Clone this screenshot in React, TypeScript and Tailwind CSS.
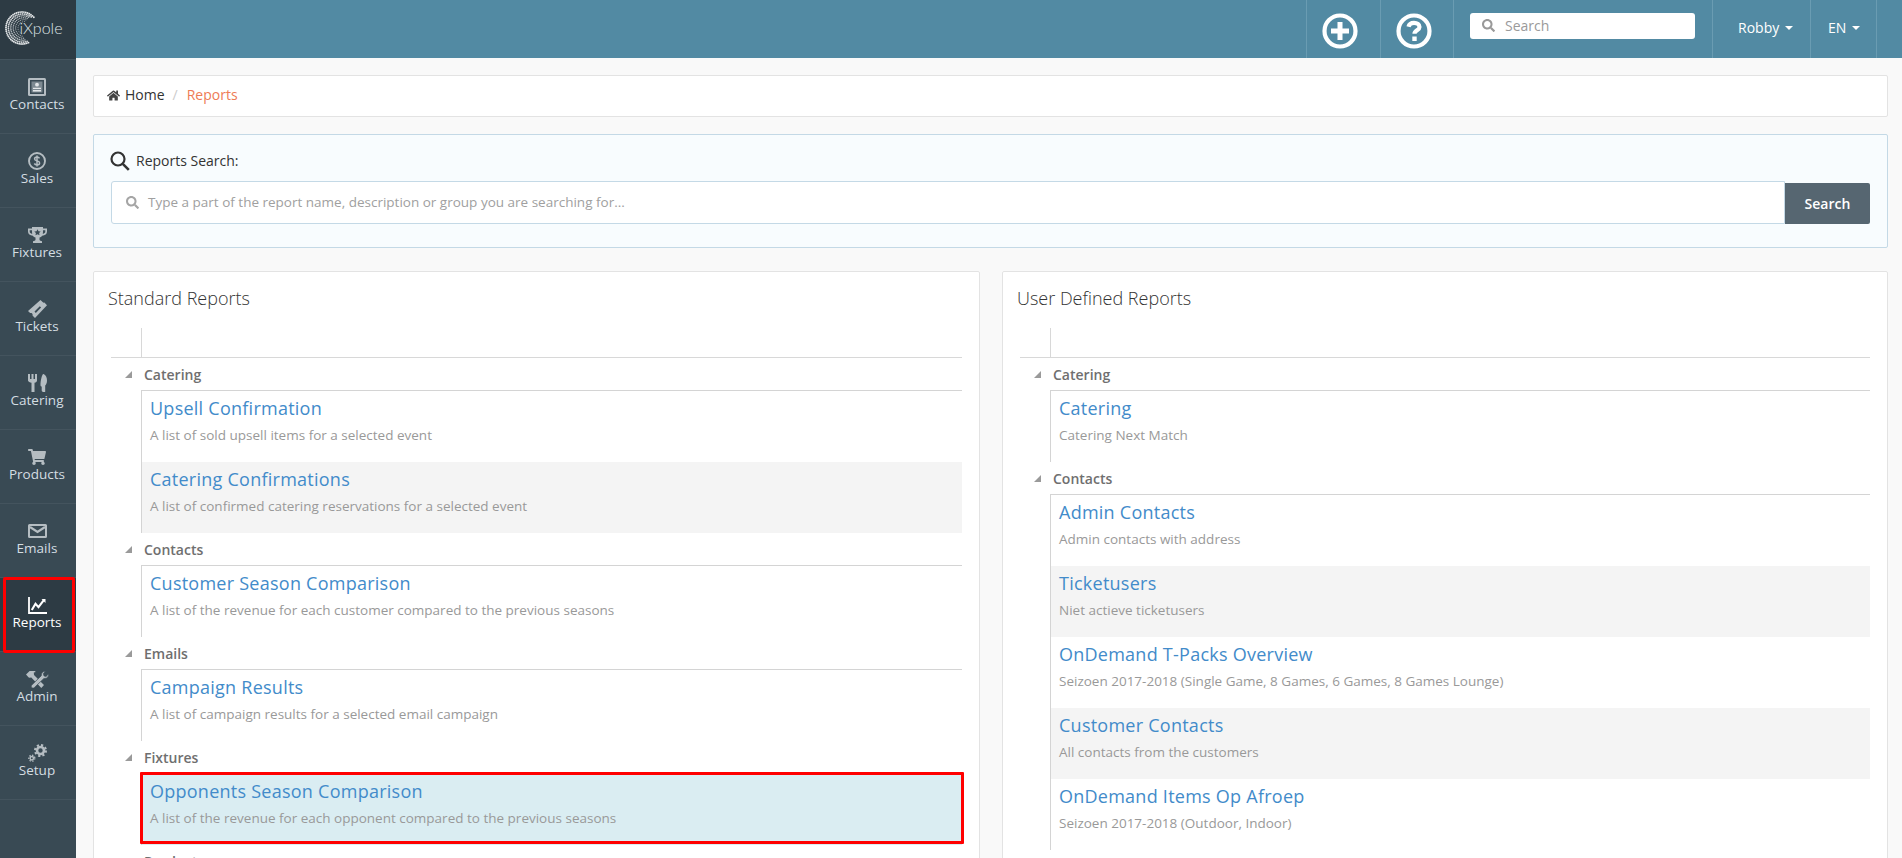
import React from "react";
import { FaHome, FaSearch, FaShoppingCart } from "react-icons/fa";

const IconContacts = () => (
  <svg width="18" height="18" viewBox="0 0 18 18">
    <rect x="0" y="0" width="18" height="18" rx="1.500" fill="currentColor" />
    <rect x="2" y="2" width="14" height="14" fill="#394a54" />
    <rect x="3.500" y="3.500" width="11" height="11" fill="currentColor" opacity="0.55" />
    <circle cx="9" cy="6.700" r="1.900" fill="#e2e6e8" />
    <path d="M5 9.700h8v1.400H5zM5 12h8v1.500H5z" fill="#e2e6e8" />
  </svg>
);
const IconDollar = () => (
  <svg width="18" height="18" viewBox="0 0 18 18" fill="none" stroke="currentColor">
    <circle cx="9" cy="9" r="8" strokeWidth="1.900" />
    <path d="M11.500 6.300C11 5.300 10 5 9 5 7.600 5 6.600 5.800 6.600 6.900c0 2.600 5 1.400 5 4 0 1.200-1.100 2-2.600 2-1.100 0-2.100-.4-2.700-1.400M9 3.500v11" strokeWidth="1.500" />
  </svg>
);
const IconTrophy = () => (
  <svg width="19" height="16" viewBox="0 0 19 16" fill="currentColor">
    <path fillRule="evenodd" d="M4 0h11v1.500h4v3c0 2.500-2 4-4.800 4.200-.7 1-1.600 1.600-2.700 1.900V13c0 .5 1.500.8 2.500 1.200V16H5v-1.800C6 13.800 7.500 13.500 7.500 13v-2.400c-1.100-.3-2-.9-2.700-1.900C2 8.500 0 7 0 4.500v-3h4zM1.700 3.200v1.300c0 1.300 1 2.100 2.500 2.400-.2-1-.2-2.400-.2-3.700zm15.600 0H15c0 1.300 0 2.700-.2 3.700 1.500-.3 2.500-1.100 2.500-2.400zM9.500 2.200 8.500 4.300l-2.200.3 1.600 1.500-.4 2.200 2-1 2 1-.4-2.200 1.600-1.500-2.200-.3z" />
  </svg>
);
const IconTicket = () => (
  <svg width="19" height="18" viewBox="0 0 19 18" fill="currentColor">
    <path fillRule="evenodd" d="M12.500 0 14.600 2.100c.4.500 1.200.7 1.800.5L19 5.200 7 18l-2.500-2.500c.3-.8.100-1.500-.4-2-.6-.5-1.300-.6-2-.4L0 11zM11.800 6.300 6.500 11.600l1.300 1.300 5.300-5.300z" />
  </svg>
);
const IconCutlery = () => (
  <svg width="19" height="18" viewBox="0 0 19 18" fill="currentColor">
    <path d="M0 0h2v5h1.500V0h2v5H7V0h2v6.500c0 1.300-1 2-2.500 2.300V18h-3V8.800C2 8.500 0 7.800 0 6.500z" />
    <path d="M15.500 0C17.800 1 19 3.500 19 6.500c0 2.300-.8 4.200-1.800 5V18h-2c-.8 0-1.500-.8-1.500-1.700v-3.800c-.6 0-1.200-.5-1.200-1.300 0-4 1-9 2.500-11.200z" />
  </svg>
);
const IconEnvelope = () => (
  <svg width="19" height="14" viewBox="0 0 19 14" fill="none" stroke="currentColor" strokeWidth="2">
    <rect x="1" y="1" width="17" height="12" rx="0.500" />
    <path d="M2 3l7.500 5L17 3" strokeWidth="2.200" />
  </svg>
);
const IconReports = () => (
  <svg width="19" height="17" viewBox="0 0 19 17" fill="none" stroke="currentColor">
    <path d="M1 0v16h18" strokeWidth="1.800" />
    <path d="M3.800 13 7.500 6.800l3 3.400L16 2.800" strokeWidth="2.100" />
    <path d="M13.500 2h4v4z" fill="currentColor" stroke="none" />
  </svg>
);
const IconTools = () => (
  <svg width="23" height="17" viewBox="0 0 23 17" fill="currentColor">
    <path d="M0 3.600 3.600 0h5.200l1 1-2 .6L8 4l10 10-2.700 3-10-10.500-2.300.2-1.200-1.300z" />
    <path d="M22.500 2.800c.6 2.300-1 4.600-3.700 4.700l-.8-.1-9.800 9.300c-.8.600-2 .5-2.600-.3-.6-.7-.5-1.800.2-2.400l9.500-9.300c-.4-2.500 1.500-4.500 4.500-4.400l-2.400 2.300.6 2.300 2.200.5z" stroke="#394a54" strokeWidth="0.700" />
  </svg>
);
const IconCogs = () => (
  <svg width="19" height="18" viewBox="0 0 19 18" fill="none" stroke="currentColor">
    <circle cx="12.500" cy="6.500" r="3.500" strokeWidth="2.600" />
    <circle cx="12.500" cy="6.500" r="5.500" strokeWidth="2" strokeDasharray="2.200 2.100" />
    <circle cx="3.800" cy="14.200" r="1.700" strokeWidth="1.500" />
    <circle cx="3.800" cy="14.200" r="3" strokeWidth="1.300" strokeDasharray="1.400 1.400" />
  </svg>
);
const IconPlus = () => (
  <svg width="36" height="36" viewBox="0 0 36 36" fill="none" stroke="#fff">
    <circle cx="18" cy="18" r="15.500" strokeWidth="4.200" />
    <path d="M18 9v18M9 18h18" strokeWidth="5" />
  </svg>
);
const IconHelp = () => (
  <svg width="36" height="36" viewBox="0 0 36 36" fill="none" stroke="#fff">
    <circle cx="18" cy="18" r="15.500" strokeWidth="4.200" />
    <path d="M12.500 13.800c.6-2.500 2.700-3.900 5.500-3.900 3.200 0 5.500 1.600 5.500 4.100 0 3.400-5 3.300-5 6.800" strokeWidth="4.200" />
    <path d="M18.500 23.500v4.500" strokeWidth="4.400" />
  </svg>
);
const Logo = () => {
  const dots: { x: number; y: number; r: number; o: number }[] = [];
  for (let k = 0; k < 6; k++) {
    const rad = 16 - k * 1.9;
    const cx = 22 + k * 0.5;
    const n = Math.round((2 * Math.PI * rad) / 1.9);
    for (let i = 0; i < n; i++) {
      const deg = (i / n) * 360;
      if (deg > 48 - k * 8 && deg < 152 + k * 8) continue;
      const t = (deg * Math.PI) / 180;
      dots.push({ x: cx + rad * Math.sin(t), y: 28 - rad * Math.cos(t), r: 0.95 - k * 0.07, o: 1 - k * 0.1 });
    }
  }
  return (
    <svg width="64" height="48" viewBox="0 0 64 48" className="block">
      {dots.map((d, i) => (
        <circle key={i} cx={d.x} cy={d.y} r={d.r} fill="#e4e7e9" opacity={d.o} />
      ))}
      <text x="19.500" y="34" fontSize="16" fill="#dfe3e5" fontFamily="Lato, sans-serif" fontWeight="300">iXpole</text>
    </svg>
  );
};

const navItems: { label: string; icon: React.ReactNode; active?: boolean }[] = [
  { label: "Contacts", icon: <IconContacts /> },
  { label: "Sales", icon: <IconDollar /> },
  { label: "Fixtures", icon: <IconTrophy /> },
  { label: "Tickets", icon: <IconTicket /> },
  { label: "Catering", icon: <IconCutlery /> },
  { label: "Products", icon: <FaShoppingCart size={18} /> },
  { label: "Emails", icon: <IconEnvelope /> },
  { label: "Reports", icon: <IconReports />, active: true },
  { label: "Admin", icon: <IconTools /> },
  { label: "Setup", icon: <IconCogs /> },
];

type Item = { title: string; desc: string; alt?: boolean; hl?: boolean };
type Group = { name: string; items: Item[] };

const standard: Group[] = [
  {
    name: "Catering",
    items: [
      { title: "Upsell Confirmation", desc: "A list of sold upsell items for a selected event" },
      { title: "Catering Confirmations", desc: "A list of confirmed catering reservations for a selected event", alt: true },
    ],
  },
  { name: "Contacts", items: [{ title: "Customer Season Comparison", desc: "A list of the revenue for each customer compared to the previous seasons" }] },
  { name: "Emails", items: [{ title: "Campaign Results", desc: "A list of campaign results for a selected email campaign" }] },
  { name: "Fixtures", items: [{ title: "Opponents Season Comparison", desc: "A list of the revenue for each opponent compared to the previous seasons", hl: true }] },
  { name: "Products", items: [] },
];
const userDefined: Group[] = [
  { name: "Catering", items: [{ title: "Catering", desc: "Catering Next Match" }] },
  {
    name: "Contacts",
    items: [
      { title: "Admin Contacts", desc: "Admin contacts with address" },
      { title: "Ticketusers", desc: "Niet actieve ticketusers", alt: true },
      { title: "OnDemand T-Packs Overview", desc: "Seizoen 2017-2018 (Single Game, 8 Games, 6 Games, 8 Games Lounge)" },
      { title: "Customer Contacts", desc: "All contacts from the customers", alt: true },
      { title: "OnDemand Items Op Afroep", desc: "Seizoen 2017-2018 (Outdoor, Indoor)" },
    ],
  },
];

const Tree = ({ groups }: { groups: Group[] }) => (
  <div className="mt-[16px]">
    <div className="h-[30px] border-b border-[#d8d8d8] pl-[30px]">
      <div className="h-full w-px bg-[#d8d8d8]" />
    </div>
    {groups.map((g) => (
      <div key={g.name}>
        <div className="flex h-[32px] items-center pl-[14px]">
          <svg width="8" height="8" viewBox="0 0 8 8" className="mt-[2px] mr-[11px]">
            <path d="M7 0v7H0z" fill="#9a9a9a" />
          </svg>
          <span className="text-[14px] font-semibold text-[#6f6f6f]">{g.name}</span>
        </div>
        {g.items.length > 0 && (
          <div className="ml-[30px] border-t border-l border-[#d4d4d4]">
            {g.items.map((it) => (
              <div
                key={it.title}
                className={`relative h-[71px] pt-[5px] pl-[8px] ${it.hl ? "bg-[#daedf2]" : it.alt ? "bg-[#f4f4f4]" : "bg-white"}`}
              >
                <div className="text-[18px] leading-[24px] tracking-[0.25px] text-[#428bca]">{it.title}</div>
                <div className="mt-[5px] text-[13.500px] leading-[20px] text-[#999999]">{it.desc}</div>
                {it.hl && <div className="absolute top-[-2px] right-[-2px] bottom-[1px] left-[-2px] rounded-[1px] border-[3.500px] border-[#ff0000]" />}
              </div>
            ))}
          </div>
        )}
      </div>
    ))}
  </div>
);

const Panel = ({ title, groups, className }: { title: string; groups: Group[]; className: string }) => (
  <section className={`${className} rounded-[2px] border border-[#e3e3e3] bg-white px-[17px] pt-[12px] pb-[17px]`}>
    <h2 className="-ml-[3px] text-[18px] leading-[28px] font-light text-[#333333]">{title}</h2>
    <Tree groups={groups} />
  </section>
);

export default function App() {
  return (
    <div className="flex h-[858px] w-full overflow-hidden bg-[#f9f9f9] font-['Open_Sans',sans-serif] text-[14px] text-[#333333]">
      <aside className="flex h-full w-[76px] shrink-0 flex-col bg-[#394a54]">
        <div className="h-[59px] shrink-0 bg-[#2d3b44]">
          <Logo />
        </div>
        <nav className="border-t border-[#44545e]">
          {navItems.map((n) => (
            <div
              key={n.label}
              className={`relative flex h-[74px] flex-col items-center border-b border-[#44545e] pt-[17px] pr-[2px] ${n.active ? "bg-[#2d3b44] text-white" : "text-[#d4dde2]"}`}
            >
              <div className={`flex h-[20px] items-center justify-center ${n.active ? "text-white" : "text-[#b5bdc2]"}`}>{n.icon}</div>
              <span className="-mt-[2px] text-[13.500px] leading-[18px]">{n.label}</span>
              {n.active && <div className="absolute top-[-1px] right-[1px] bottom-[-2px] left-[3px] rounded-[2px] border-[3.500px] border-[#ff0000]" />}
            </div>
          ))}
        </nav>
      </aside>

      <div className="flex min-w-0 flex-1 flex-col">
        <header className="flex h-[58px] shrink-0 items-stretch justify-end bg-[#528aa3] pr-[25px] text-white">
          <div className="flex w-[74px] items-center justify-center border-l border-[#6a9cb2] pt-[4px] pr-[8px]"><IconPlus /></div>
          <div className="flex w-[73px] items-center justify-center border-l border-[#6a9cb2] pt-[4px] pr-[7px]"><IconHelp /></div>
          <div className="w-[259px] border-l border-[#6a9cb2] pt-[13px] pl-[16px]">
            <div className="flex h-[26px] w-[225px] items-center rounded-[3px] bg-white pb-[2px] pl-[12px] text-[14px] text-[#9a9a9a]">
              <FaSearch size={13} className="mr-[10px]" color="#999999" />
              Search
            </div>
          </div>
          <div className="flex w-[98px] items-center border-l border-[#6a9cb2] pb-[4px] pl-[25px]">
            Robby
            <span className="mt-[2px] ml-[6px] h-0 w-0 border-x-[4px] border-t-[4px] border-x-transparent border-t-white" />
          </div>
          <div className="flex w-[67px] items-center border-x border-[#6a9cb2] pb-[4px] pl-[17px]">
            EN
            <span className="mt-[2px] ml-[6px] h-0 w-0 border-x-[4px] border-t-[4px] border-x-transparent border-t-white" />
          </div>
        </header>

        <main className="flex min-h-0 flex-1 flex-col pt-[17px] pr-[14px] pl-[17px]">
          <div className="flex h-[42px] shrink-0 items-center rounded-[2px] border border-[#e3e3e3] bg-white pb-[3px] pl-[13px]">
            <FaHome size={13} className="mt-[1px] mr-[5px]" color="#444444" />
            <span className="text-[#333333]">Home</span>
            <span className="mr-[9px] ml-[8px] text-[#cccccc]">/</span>
            <span className="text-[#ee7b55]">Reports</span>
          </div>

          <div className="mt-[17px] h-[114px] shrink-0 rounded-[2px] border border-[#c4d9e6] bg-[#f8fcfe] px-[17px] pt-[15px]">
            <div className="flex h-[20px] items-center text-[#333333]">
              <svg width="20" height="20" viewBox="0 0 20 20" fill="none" stroke="#333333" strokeWidth="2.200" className="mt-[2px] mr-[6px] -ml-[1px]">
                <circle cx="8" cy="8" r="6.500" />
                <path d="m12.800 12.800 6 6" strokeWidth="2.600" />
              </svg>
              <span className="text-[14px]">Reports Search:</span>
            </div>
            <div className="mt-[11px] flex h-[43px] items-stretch">
              <div className="flex flex-1 items-center rounded-l-[3px] border border-[#c4d9e6] bg-white pl-[14px] text-[13.500px] text-[#a0a0a0]">
                <FaSearch size={13} className="mr-[9px]" color="#a5a5a5" />
                Type a part of the report name, description or group you are searching for...
              </div>
              <div className="mt-[2px] flex w-[85px] items-center justify-center rounded-r-[2px] bg-[#566671] text-[14px] font-semibold text-white">Search</div>
            </div>
          </div>

          <div className="mt-[23px] flex min-h-0 flex-1 items-start gap-[22px] overflow-hidden">
            <Panel title="Standard Reports" groups={standard} className="w-[887px] shrink-0" />
            <Panel title="User Defined Reports" groups={userDefined} className="min-w-0 flex-1" />
          </div>
        </main>
      </div>
    </div>
  );
}
